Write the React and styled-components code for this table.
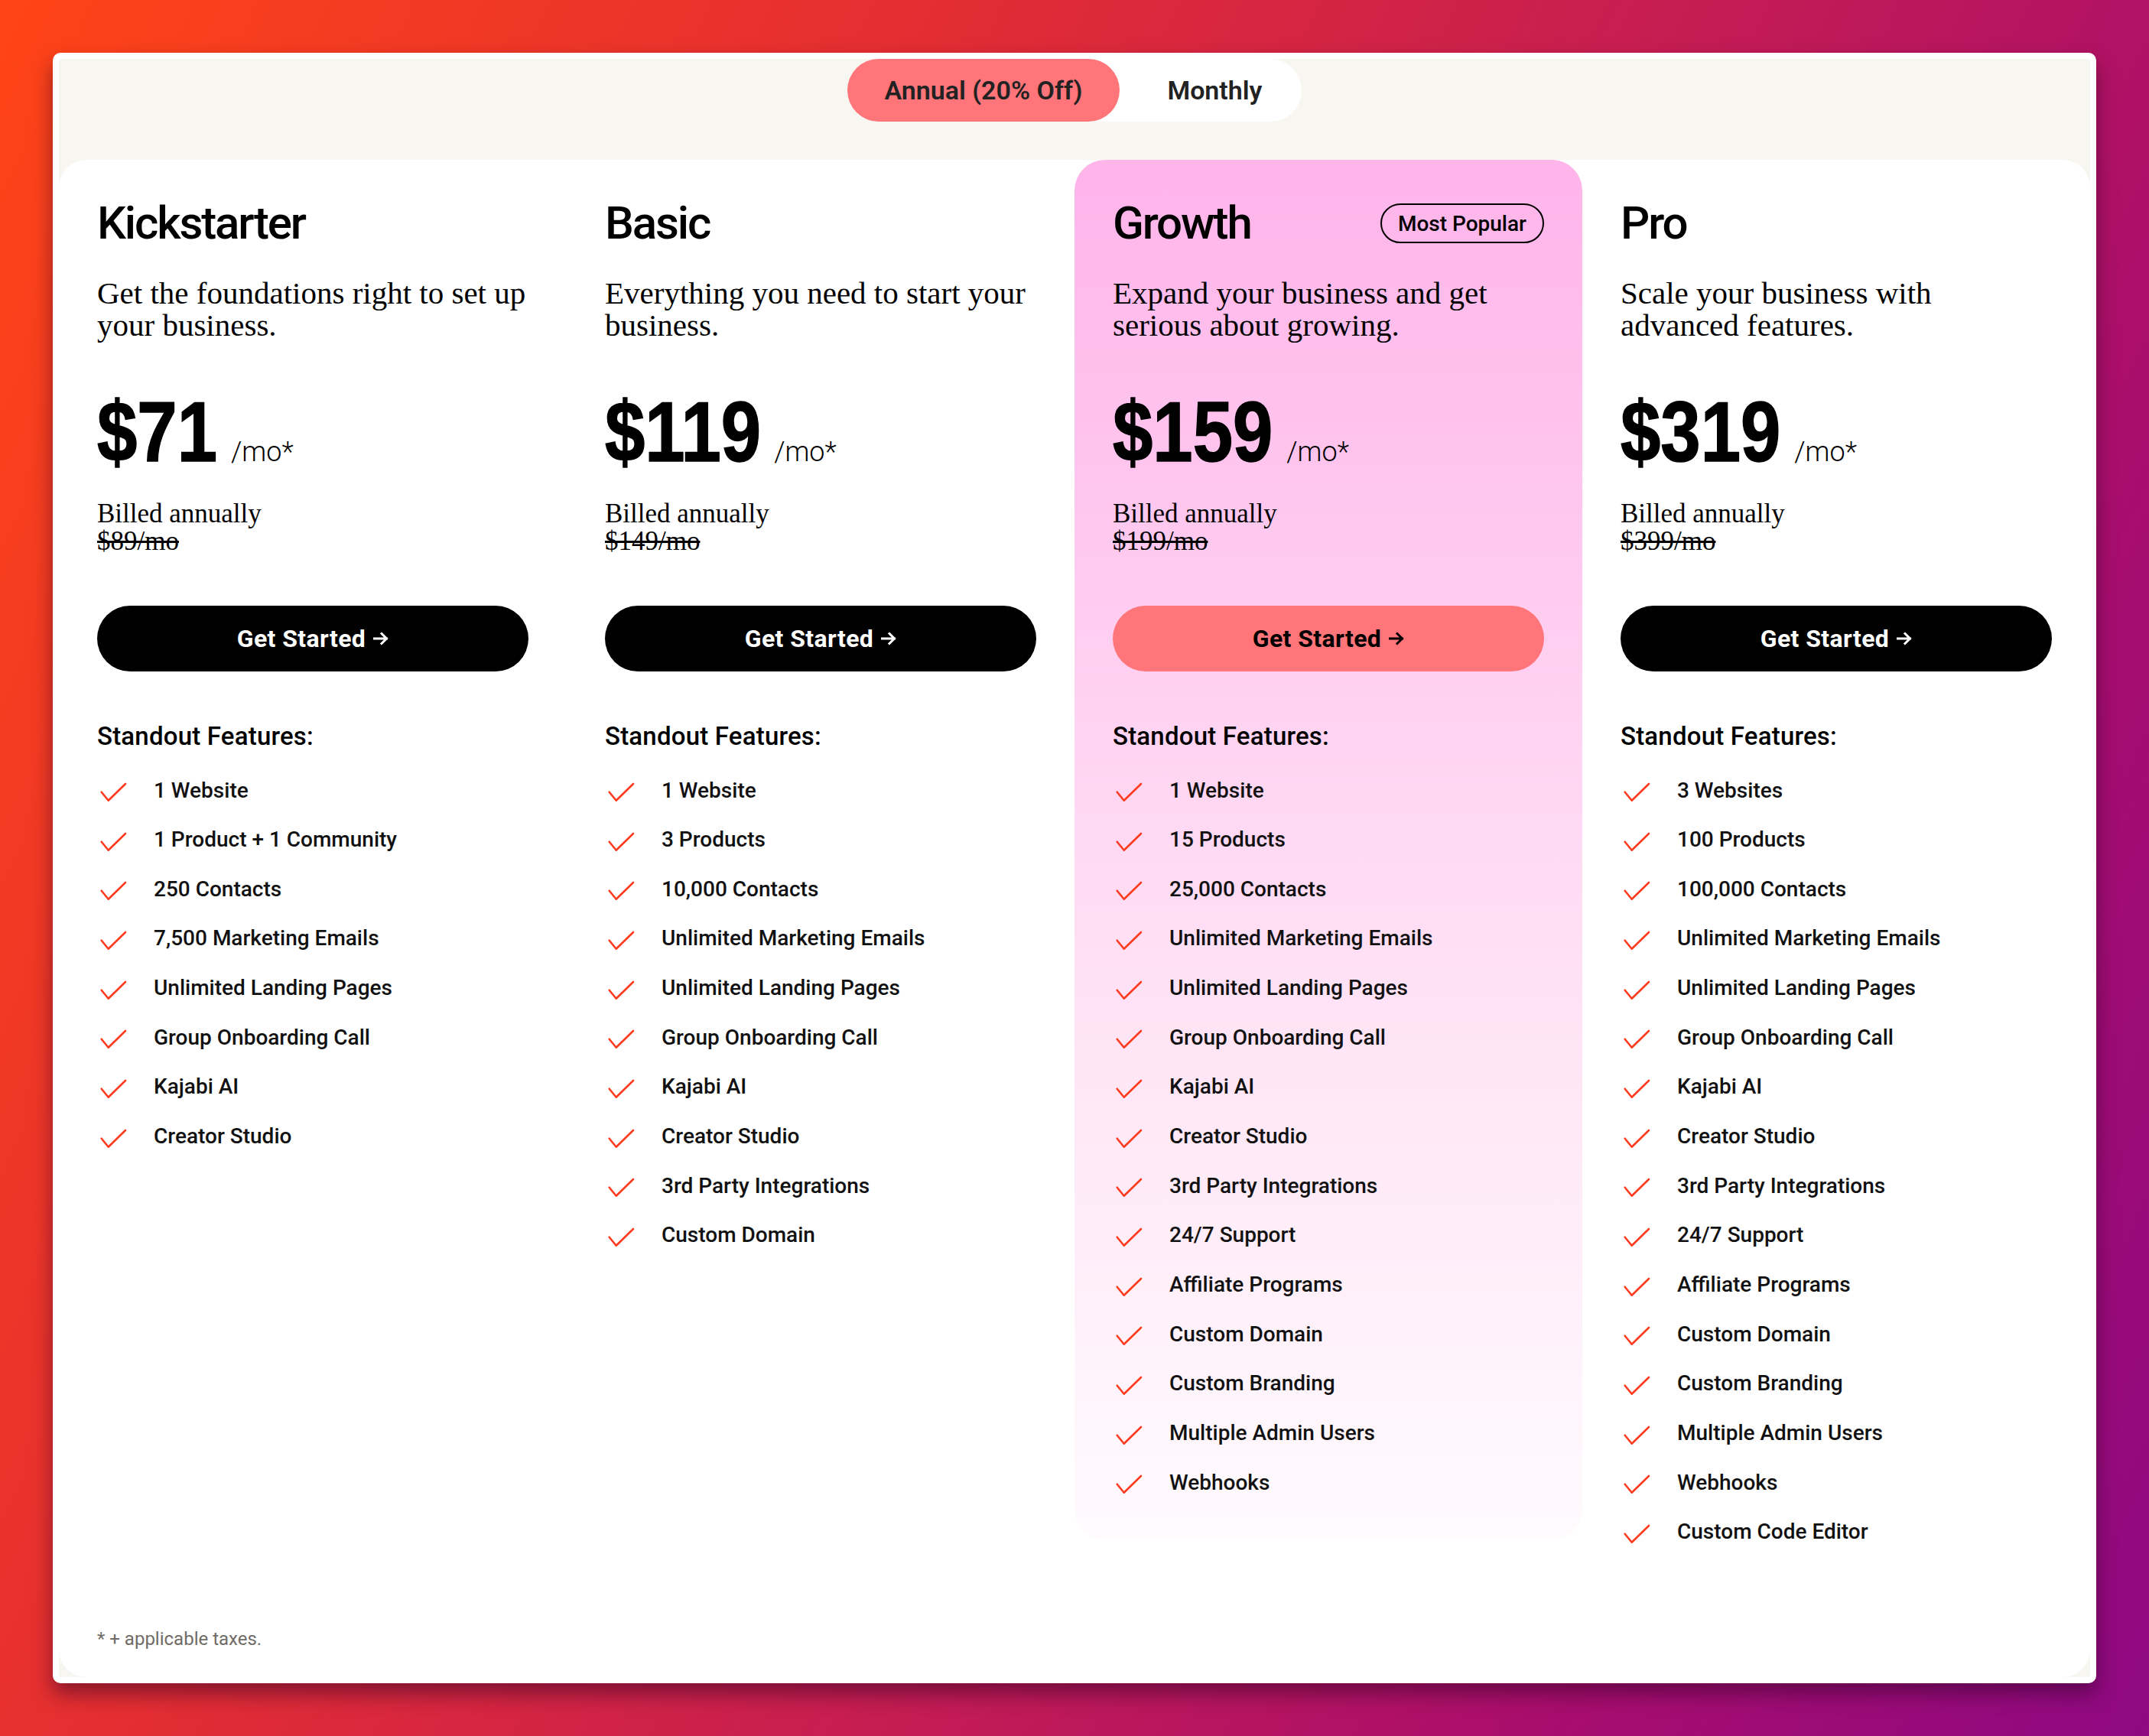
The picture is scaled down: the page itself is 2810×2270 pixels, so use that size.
import React from "react";
import styled, { createGlobalStyle } from "styled-components";

const GlobalStyle = createGlobalStyle`
  html, body {
    margin: 0;
    padding: 0;
  }
  body {
    min-height: 2270px;
    background: linear-gradient(115deg, #ff4417 0%, #e32d33 32%, #c81e50 55%, #a80d6e 80%, #8e0982 100%);
    font-family: "Roboto", "Liberation Sans", sans-serif;
    color: #000;
  }
  * {
    box-sizing: border-box;
  }
`;

const plans = [
  {
    name: "Kickstarter",
    desc: "Get the foundations right to set up\nyour business.",
    price: "$71",
    old: "$89/mo",
    features: [
      "1 Website",
      "1 Product + 1 Community",
      "250 Contacts",
      "7,500 Marketing Emails",
      "Unlimited Landing Pages",
      "Group Onboarding Call",
      "Kajabi AI",
      "Creator Studio",
    ],
  },
  {
    name: "Basic",
    desc: "Everything you need to start your\nbusiness.",
    price: "$119",
    old: "$149/mo",
    features: [
      "1 Website",
      "3 Products",
      "10,000 Contacts",
      "Unlimited Marketing Emails",
      "Unlimited Landing Pages",
      "Group Onboarding Call",
      "Kajabi AI",
      "Creator Studio",
      "3rd Party Integrations",
      "Custom Domain",
    ],
  },
  {
    name: "Growth",
    popular: true,
    desc: "Expand your business and get\nserious about growing.",
    price: "$159",
    old: "$199/mo",
    features: [
      "1 Website",
      "15 Products",
      "25,000 Contacts",
      "Unlimited Marketing Emails",
      "Unlimited Landing Pages",
      "Group Onboarding Call",
      "Kajabi AI",
      "Creator Studio",
      "3rd Party Integrations",
      "24/7 Support",
      "Affiliate Programs",
      "Custom Domain",
      "Custom Branding",
      "Multiple Admin Users",
      "Webhooks",
    ],
  },
  {
    name: "Pro",
    desc: "Scale your business with\nadvanced features.",
    price: "$319",
    old: "$399/mo",
    features: [
      "3 Websites",
      "100 Products",
      "100,000 Contacts",
      "Unlimited Marketing Emails",
      "Unlimited Landing Pages",
      "Group Onboarding Call",
      "Kajabi AI",
      "Creator Studio",
      "3rd Party Integrations",
      "24/7 Support",
      "Affiliate Programs",
      "Custom Domain",
      "Custom Branding",
      "Multiple Admin Users",
      "Webhooks",
      "Custom Code Editor",
    ],
  },
];

// price digits are squeezed horizontally, so give back the space the squeeze frees
const PRICE_SIZE = 112;
const PRICE_SQUEEZE = 0.84;

const Check = () => (
  <CheckIcon viewBox="0 0 40 40" fill="none">
    <path
      d="M5.7 22.7 L14.7 33.7 L37 12"
      stroke="#ff3b1f"
      strokeWidth="2.6"
      strokeLinecap="round"
      strokeLinejoin="round"
    />
  </CheckIcon>
);

const Arrow = () => (
  <ArrowIcon viewBox="0 0 20 20" fill="none">
    <path
      d="M1.5 10 H17.5 M11 3.5 L17.5 10 L11 16.5"
      stroke="currentColor"
      strokeWidth="3"
      strokeLinecap="square"
    />
  </ArrowIcon>
);

const App = () => {
  return (
    <>
      <GlobalStyle />
      <Page>
        <Frame>
          <Inner>
            <ToggleRow>
              <Toggle>
                <ToggleOption active>Annual (20% Off)</ToggleOption>
                <ToggleOption>Monthly</ToggleOption>
              </Toggle>
            </ToggleRow>
            <Panel>
              <Cards>
                {plans.map((p) => (
                  <Card key={p.name} highlight={p.popular}>
                    <Header>
                      <Title>{p.name}</Title>
                      {p.popular && <Badge>Most Popular</Badge>}
                    </Header>
                    <Desc>{p.desc}</Desc>
                    <PriceRow>
                      <Price
                        style={{
                          marginRight:
                            -(1 - PRICE_SQUEEZE) *
                            p.price.length *
                            0.556 *
                            PRICE_SIZE,
                        }}
                      >
                        {p.price}
                      </Price>
                      <Per>/mo*</Per>
                    </PriceRow>
                    <Billed>Billed annually</Billed>
                    <Old>{p.old}</Old>
                    <Button highlight={p.popular}>
                      Get Started <Arrow />
                    </Button>
                    <FeatHead>Standout Features:</FeatHead>
                    <List>
                      {p.features.map((f) => (
                        <Item key={f}>
                          <Check />
                          <span>{f}</span>
                        </Item>
                      ))}
                    </List>
                  </Card>
                ))}
              </Cards>
              <Footnote>* + applicable taxes.</Footnote>
            </Panel>
          </Inner>
        </Frame>
      </Page>
    </>
  );
};
export default App;

const Page = styled.div`
  padding: 69px;
`;

const Frame = styled.div`
  background: #fff;
  border-radius: 10px;
  padding: 8px;
  box-shadow: 0 14px 26px rgba(45, 0, 35, 0.5);
`;

const Inner = styled.div`
  background: #f8f6f1;
  border-radius: 2px;
`;

const ToggleRow = styled.div`
  display: flex;
  justify-content: center;
  padding-bottom: 50px;
`;

const Toggle = styled.div`
  display: flex;
  height: 82px;
  background: #fff;
  border-radius: 41px;
`;

const ToggleOption = styled.div`
  display: flex;
  align-items: center;
  justify-content: center;
  padding: ${(p) => (p.active ? "0 49px" : "0 52px 0 62px")};
  border-radius: 41px;
  background: ${(p) => (p.active ? "#ff7579" : "transparent")};
  font-family: "Roboto", "Liberation Sans", sans-serif;
  font-weight: 600;
  font-size: 34px;
  color: #222;
`;

const Panel = styled.div`
  background: #fff;
  border-radius: 36px;
  padding-bottom: 35px;
`;

const Cards = styled.div`
  display: grid;
  grid-template-columns: repeat(4, 1fr);
  align-items: start;
`;

const Card = styled.div`
  padding: 47px 50px 56px;
  border-radius: 40px;
  background: ${(p) =>
    p.highlight
      ? "linear-gradient(180deg, #ffb4ea 0%, #ffd0f1 37%, #ffe6f6 66%, #fffbfe 100%)"
      : "transparent"};
`;

const Header = styled.div`
  display: flex;
  align-items: center;
  justify-content: space-between;
  height: 72px;
`;

const Title = styled.h2`
  margin: 0;
  font-family: "Roboto", "Liberation Sans", sans-serif;
  font-weight: 500;
  font-size: 60px;
  line-height: 72px;
  letter-spacing: -0.035em;
`;

const Badge = styled.div`
  height: 52px;
  padding: 0 21px;
  display: flex;
  align-items: center;
  border: 2px solid #000;
  border-radius: 26px;
  font-family: "Roboto", "Liberation Sans", sans-serif;
  font-weight: 500;
  font-size: 28px;
`;

const Desc = styled.p`
  margin: 34px 0 0;
  font-family: "Liberation Serif", serif;
  font-size: 41px;
  line-height: 42px;
  white-space: pre-line;
`;

const PriceRow = styled.div`
  display: flex;
  align-items: baseline;
  gap: 18px;
  margin-top: 63px;
`;

const Price = styled.span`
  display: inline-block;
  font-family: "Liberation Sans", sans-serif;
  font-weight: 700;
  font-size: ${PRICE_SIZE}px;
  line-height: ${PRICE_SIZE}px;
  -webkit-text-stroke: 1.6px #000;
  transform: scaleX(${PRICE_SQUEEZE});
  transform-origin: left bottom;
`;

const Per = styled.span`
  font-family: "Roboto", "Liberation Sans", sans-serif;
  font-weight: 300;
  font-size: 36px;
`;

const Billed = styled.div`
  margin-top: 33px;
  font-family: "Liberation Serif", serif;
  font-size: 35px;
  line-height: 36px;
`;

const Old = styled.div`
  font-family: "Liberation Serif", serif;
  font-size: 35px;
  line-height: 36px;
  text-decoration: line-through;
`;

const Button = styled.button`
  margin-top: 66px;
  width: 100%;
  height: 86px;
  border: none;
  border-radius: 43px;
  display: flex;
  align-items: center;
  justify-content: center;
  gap: 10px;
  background: ${(p) => (p.highlight ? "#ff7579" : "#000")};
  color: ${(p) => (p.highlight ? "#000" : "#fff")};
  font-family: "Roboto", "Liberation Sans", sans-serif;
  font-weight: 700;
  font-size: 32px;
  letter-spacing: 0.4px;
  cursor: pointer;
`;

const ArrowIcon = styled.svg`
  width: 20px;
  height: 20px;
`;

const FeatHead = styled.div`
  margin-top: 65px;
  font-family: "Roboto", "Liberation Sans", sans-serif;
  font-weight: 500;
  font-size: 33px;
  line-height: 40px;
  letter-spacing: 0.2px;
`;

const List = styled.ul`
  list-style: none;
  margin: 30px 0 0;
  padding: 0;
  display: flex;
  flex-direction: column;
  gap: 24.67px;
`;

const Item = styled.li`
  display: flex;
  align-items: center;
  height: 40px;
  font-family: "Roboto", "Liberation Sans", sans-serif;
  font-weight: 500;
  font-size: 28px;
  color: #111;
`;

const CheckIcon = styled.svg`
  width: 40px;
  height: 40px;
  flex-shrink: 0;
  margin-right: 34px;
`;

const Footnote = styled.div`
  margin-top: 49px;
  padding-left: 50px;
  font-family: "Roboto", "Liberation Sans", sans-serif;
  font-size: 24px;
  line-height: 30px;
  color: #6f6b66;
`;
